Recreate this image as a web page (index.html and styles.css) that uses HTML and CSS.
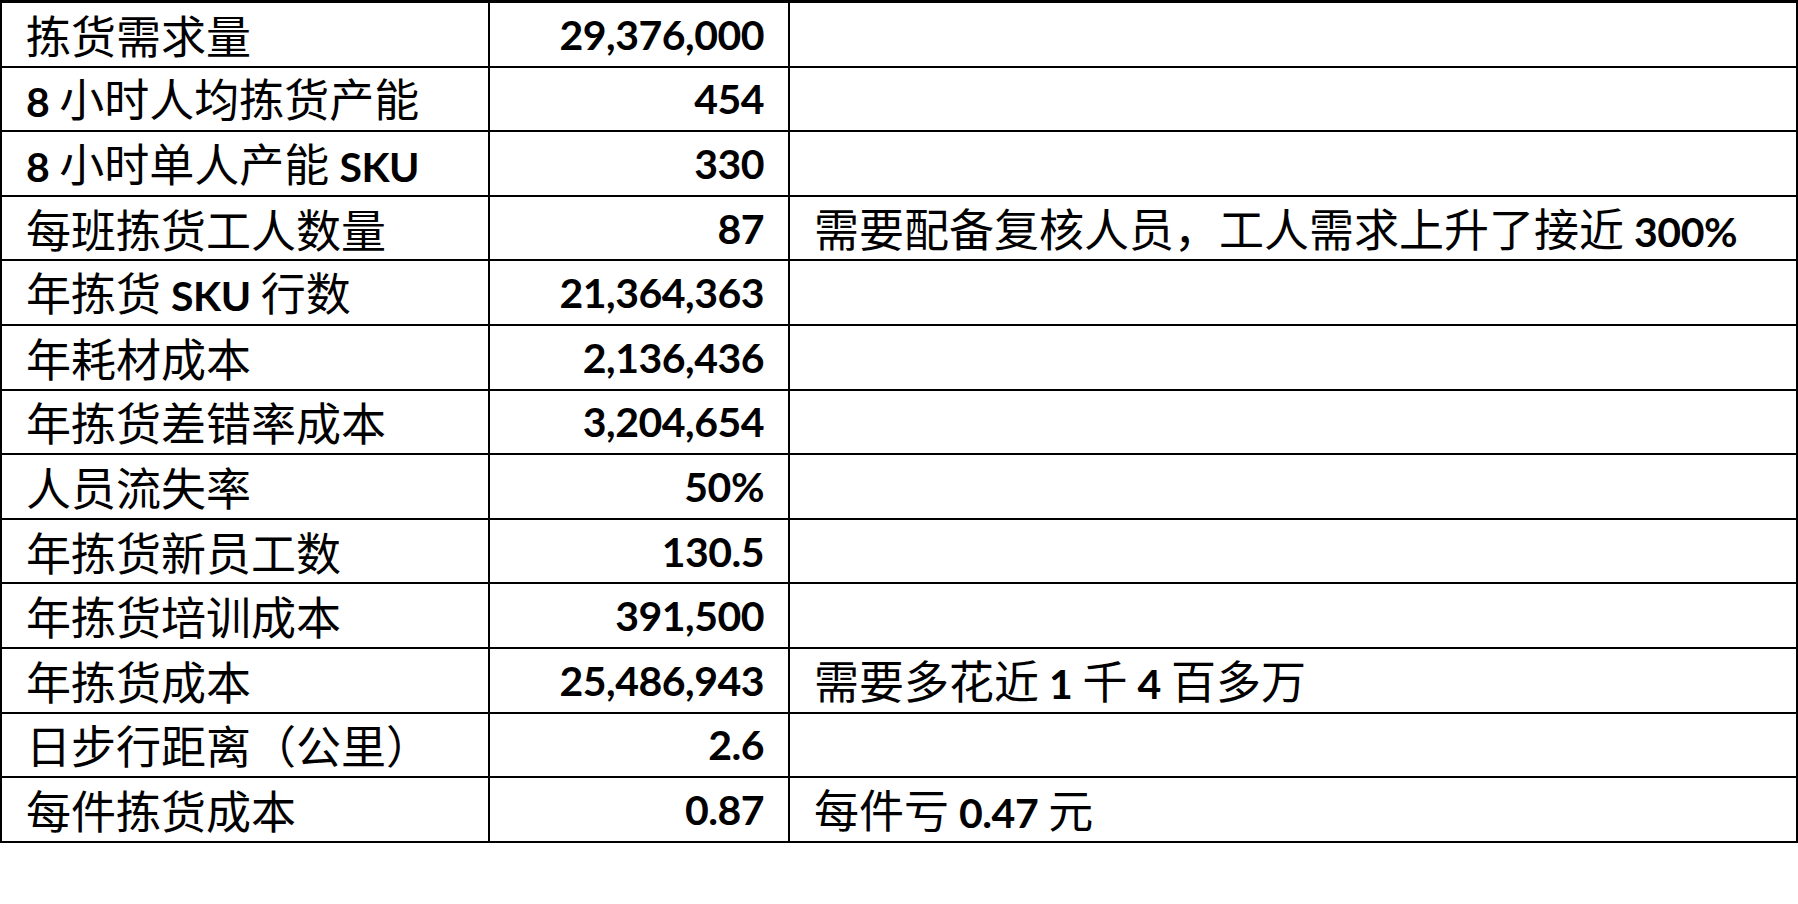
FILE: index.html
```html
<!DOCTYPE html>
<html lang="zh-CN">
<head>
<meta charset="utf-8">
<title>拣货成本</title>
<link rel="stylesheet" href="styles.css">
</head>
<body>
<table class="sheet">
  <colgroup><col class="c1"><col class="c2"><col class="c3"></colgroup>
  <tbody>
    <tr><td class="label">拣货需求量</td><td class="num">29,376,000</td><td class="note"></td></tr>
    <tr><td class="label"><span class="n">8</span> 小时人均拣货产能</td><td class="num">454</td><td class="note"></td></tr>
    <tr><td class="label"><span class="n">8</span> 小时单人产能 <span class="n">SKU</span></td><td class="num">330</td><td class="note"></td></tr>
    <tr><td class="label">每班拣货工人数量</td><td class="num">87</td><td class="note">需要配备复核人员，工人需求上升了接近 <span class="n">300%</span></td></tr>
    <tr><td class="label">年拣货 <span class="n">SKU</span> 行数</td><td class="num">21,364,363</td><td class="note"></td></tr>
    <tr><td class="label">年耗材成本</td><td class="num">2,136,436</td><td class="note"></td></tr>
    <tr><td class="label">年拣货差错率成本</td><td class="num">3,204,654</td><td class="note"></td></tr>
    <tr><td class="label">人员流失率</td><td class="num">50%</td><td class="note"></td></tr>
    <tr><td class="label">年拣货新员工数</td><td class="num">130.5</td><td class="note"></td></tr>
    <tr><td class="label">年拣货培训成本</td><td class="num">391,500</td><td class="note"></td></tr>
    <tr><td class="label">年拣货成本</td><td class="num">25,486,943</td><td class="note">需要多花近 <span class="n">1</span> 千 <span class="n">4</span> 百多万</td></tr>
    <tr><td class="label">日步行距离（公里）</td><td class="num">2.6</td><td class="note"></td></tr>
    <tr><td class="label">每件拣货成本</td><td class="num">0.87</td><td class="note">每件亏 <span class="n">0.47</span> 元</td></tr>
  </tbody>
</table>
</body>
</html>
```
FILE: styles.css
```css
html, body {
  margin: 0;
  padding: 0;
  background: #ffffff;
}

.sheet {
  border-collapse: collapse;
  table-layout: fixed;
  width: 1798px;
  color: #000;
  font-family: "Noto Sans CJK SC", sans-serif;
  font-size: 45px;
}

.c1 { width: 488px; }
.c2 { width: 300px; }
.c3 { width: auto; }

.sheet td {
  border: 2px solid #000;
  height: 62.6px;
  padding: 0 24px;
  white-space: nowrap;
  line-height: 1;
  vertical-align: middle;
}

.sheet tr:first-child td { border-top-width: 3px; }

.label { text-align: left; }

.num {
  text-align: right;
  font-family: "Lato", "Liberation Sans", sans-serif;
  font-weight: 700;
  font-size: 41px;
  letter-spacing: -0.5px;
  padding-top: 4px;
}

.note { text-align: left; }

.n {
  font-family: "Lato", "Liberation Sans", sans-serif;
  font-weight: 700;
  font-size: 41px;
  letter-spacing: -0.5px;
}
```
